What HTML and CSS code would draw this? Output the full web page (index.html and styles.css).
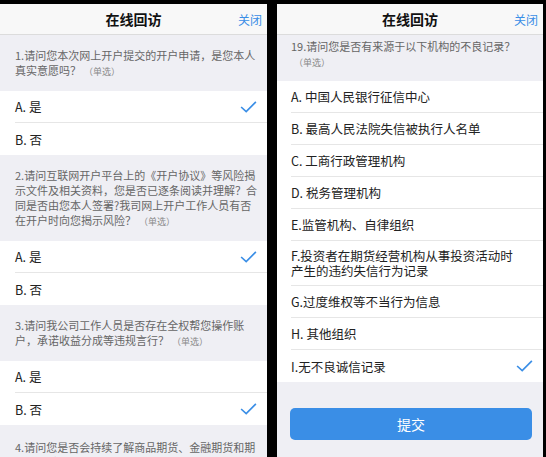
FILE: index.html
```html
<!DOCTYPE html>
<html lang="zh-CN">

<head>
    <meta charset="UTF-8">
    <meta name="viewport" content="width=device-width, initial-scale=1.0">
    <title>在线回访</title>
    <link rel="stylesheet" href="styles.css">
</head>

<body>
    <div class="screens">
        <div class="screen">
            <div class="nav">
                <span class="nav-title">在线回访</span>
                <span class="nav-close">关闭</span>
            </div>
            <div class="survey">
                <div class="question">1.请问您本次网上开户提交的开户申请，是您本人真实意愿吗？<span class="tag">（单选）</span></div>
                <ul class="options">
                    <li class="option checked"><span>A. 是</span><svg class="tick" viewBox="0 0 18 13"><polyline points="1,6.5 6.5,11.5 17,1" /></svg></li>
                    <li class="option"><span>B. 否</span></li>
                </ul>
                <div class="question">2.请问互联网开户平台上的《开户协议》等风险揭示文件及相关资料，您是否已逐条阅读并理解？合同是否由您本人签署?我司网上开户工作人员有否在开户时向您揭示风险？<span class="tag">（单选）</span></div>
                <ul class="options">
                    <li class="option checked"><span>A. 是</span><svg class="tick" viewBox="0 0 18 13"><polyline points="1,6.5 6.5,11.5 17,1" /></svg></li>
                    <li class="option"><span>B. 否</span></li>
                </ul>
                <div class="question">3.请问我公司工作人员是否存在全权帮您操作账户，承诺收益分成等违规言行？<span class="tag">（单选）</span></div>
                <ul class="options">
                    <li class="option"><span>A. 是</span></li>
                    <li class="option checked"><span>B. 否</span><svg class="tick" viewBox="0 0 18 13"><polyline points="1,6.5 6.5,11.5 17,1" /></svg></li>
                </ul>
                <div class="question question-last">4.请问您是否会持续了解商品期货、金融期货和期权的风险？<span class="tag">（单选）</span></div>
            </div>
        </div>

        <div class="screen screen-right">
            <div class="nav">
                <span class="nav-title">在线回访</span>
                <span class="nav-close">关闭</span>
            </div>
            <div class="survey">
                <div class="question question-top">19.请问您是否有来源于以下机构的不良记录？<br><span class="tag">（单选）</span></div>
                <ul class="options options-wide">
                    <li class="option"><span>A. 中国人民银行征信中心</span></li>
                    <li class="option"><span>B. 最高人民法院失信被执行人名单</span></li>
                    <li class="option"><span>C. 工商行政管理机构</span></li>
                    <li class="option"><span>D. 税务管理机构</span></li>
                    <li class="option"><span>E.监管机构、自律组织</span></li>
                    <li class="option"><span>F.投资者在期货经营机构从事投资活动时产生的违约失信行为记录</span></li>
                    <li class="option"><span>G.过度维权等不当行为信息</span></li>
                    <li class="option"><span>H. 其他组织</span></li>
                    <li class="option checked"><span>I.无不良诚信记录</span><svg class="tick" viewBox="0 0 18 13"><polyline points="1,6.5 6.5,11.5 17,1" /></svg></li>
                </ul>
                <div class="submit-wrap">
                    <button class="submit">提交</button>
                </div>
            </div>
        </div>
    </div>
</body>

</html>
```

FILE: styles.css
```css
body {
    margin: 0;
    padding: 0;
    background-color: #000;
    font-family: "Noto Sans CJK SC", "Noto Sans", sans-serif;
}

.screens {
    display: flex;
    gap: 10px;
    padding-top: 4px;
    height: 453px;
    overflow: hidden;
}

.screen {
    width: 267px;
    height: 453px;
    overflow: hidden;
    background-color: #efeff4;
    display: flex;
    flex-direction: column;
}

.screen-right {
    width: 266px;
}

.nav {
    flex: none;
    height: 30px;
    display: flex;
    align-items: center;
    justify-content: center;
    position: relative;
    background-color: #f8f8f8;
    border-bottom: 1px solid #dcdcdc;
}

.nav-title {
    font-size: 14px;
    font-weight: bold;
    color: #111;
}

.nav-close {
    position: absolute;
    right: 5px;
    top: 7px;
    font-size: 12px;
    color: #3a8ee6;
}

.question {
    padding: 13px 10px 13px 15px;
    font-size: 11px;
    line-height: 15px;
    color: #666;
}

.question-top {
    padding: 4px 10px 12px 14px;
}

.question-last {
    padding-top: 15px;
}

.tag {
    font-size: 9px;
    line-height: 1;
    color: #888;
    margin-left: 3px;
}

.options {
    list-style: none;
    margin: 0;
    padding: 0;
    background-color: #fff;
}

.option {
    min-height: 32px;
    box-sizing: border-box;
    margin-left: 15px;
    padding: 7px 10px 7px 0;
    display: flex;
    align-items: center;
    justify-content: space-between;
    font-size: 12.5px;
    line-height: 15px;
    color: #222;
    border-bottom: 1px solid #e6e6e6;
}

.option:last-child {
    border-bottom: none;
}

.options-wide .option {
    margin-left: 14px;
    padding-right: 22px;
    position: relative;
}

.tick {
    width: 17px;
    height: 12px;
    fill: none;
    stroke: #3a8ee6;
    stroke-width: 1.8;
    flex: none;
}

.options-wide .tick {
    position: absolute;
    right: 10px;
}

.submit-wrap {
    padding: 26px 11px 20px 13px;
}

.submit {
    display: block;
    width: 100%;
    height: 32px;
    border: none;
    border-radius: 5px;
    background-color: #3a8ee6;
    color: #fff;
    font-family: inherit;
    font-size: 14px;
}
```
